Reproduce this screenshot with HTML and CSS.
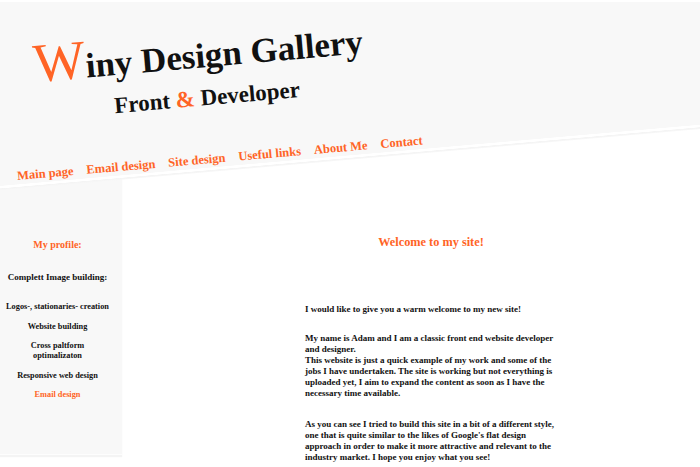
FILE: index.html
```html
<!DOCTYPE html>
<html lang="en">
<head>
<meta charset="utf-8">
<title>Winy Design Gallery</title>
<link rel="stylesheet" href="styles.css">
</head>
<body>
<header class="header">
  <div class="header-inner">
    <h1 class="title"><span class="big-w">W</span>iny Design Gallery</h1>
    <p class="subtitle">Front <span class="amp">&amp;</span> Developer</p>
    <nav class="nav">
      <a href="#">Main page</a>
      <a href="#">Email design</a>
      <a href="#">Site design</a>
      <a href="#">Useful links</a>
      <a href="#">About Me</a>
      <a href="#">Contact</a>
    </nav>
  </div>
</header>
<div class="layout">
  <aside class="sidebar">
    <h2 class="side-title">My profile:</h2>
    <h3 class="side-sub">Complett Image building:</h3>
    <ul class="side-list">
      <li>Logos-, stationaries- creation</li>
      <li>Website building</li>
      <li>Cross paltform<br>optimalizaton</li>
      <li>Responsive web design</li>
      <li class="accent">Email design</li>
    </ul>
  </aside>
  <main class="main">
    <div class="content">
      <h2 class="welcome">Welcome to my site!</h2>
      <p class="intro">I would like to give you a warm welcome to my new site!</p>
      <p class="para">My name is Adam and I am a classic front end website developer and designer.<br>This website is just a quick example of my work and some of the jobs I have undertaken. The site is working but not everything is uploaded yet, I aim to expand the content as soon as I have the necessary time available.</p>
      <p class="para para-last">As you can see I tried to build this site in a bit of a different style, one that is quite similar to the likes of Google's flat design approach in order to make it more attractive and relevant to the industry market. I hope you enjoy what you see!</p>
    </div>
  </main>
</div>
</body>
</html>
```
FILE: styles.css
```css
* { box-sizing: border-box; }
html, body { margin: 0; padding: 0; }
body {
  font-family: "Liberation Serif", "Times New Roman", serif;
  font-weight: bold;
  color: #111;
  background: #fff;
  width: 700px;
  overflow: hidden;
}

.header {
  position: relative;
  z-index: 1;
  height: 190px;
  margin-bottom: -25px;
  background:
    linear-gradient(#fff 2px, transparent 2px),
    linear-gradient(175deg, #f8f8f8 185px, #fff 185.5px, #fff 187.5px, #f4f4f4 188px, #f6f6f6 189px, transparent 190px);
}
.header-inner {
  transform: rotate(-5deg);
  transform-origin: 35px 82px;
}
.title {
  margin: 0;
  padding: 37px 0 0 35px;
  font-size: 35px;
  line-height: 54px;
  font-weight: bold;
  color: #111;
  white-space: nowrap;
}
.big-w {
  font-size: 55px;
  line-height: 54px;
  font-weight: normal;
  color: #ff6426;
}
.subtitle {
  margin: 2.6px 0 0 112px;
  font-size: 23px;
  line-height: 1;
  white-space: nowrap;
}
.amp { color: #ff6426; }
.nav {
  margin-top: 44px;
  padding-left: 9px;
  display: flex;
  gap: 13px;
  font-size: 12.5px;
  line-height: 1;
  white-space: nowrap;
}
.nav a {
  color: #ff6426;
  text-decoration: none;
}

.layout {
  display: flex;
  align-items: flex-start;
}
.sidebar {
  flex: 0 0 122px;
  height: 289px;
  background: #f8f8f8;
  padding: 74px 7px 0 0;
  text-align: center;
  box-shadow: 0 1px 0 #fdfdfd, 0 3px 1px #f4f4f4;
}
.side-title {
  margin: 0;
  font-size: 10px;
  line-height: 12px;
  color: #ff6426;
}
.side-sub {
  margin: 20.5px 0 0;
  font-size: 9px;
  line-height: 11px;
  color: #111;
}
.side-list {
  list-style: none;
  margin: 19.5px 0 0;
  padding: 0;
  display: flex;
  flex-direction: column;
  gap: 9.5px;
  font-size: 8.3px;
  line-height: 10px;
  white-space: nowrap;
}
.side-list .accent { color: #ff6426; }

.main {
  flex: 1;
  padding-top: 69.5px;
}
.content {
  width: 252px;
  margin-left: 183px;
}
.welcome {
  margin: 0;
  text-align: center;
  font-size: 12.3px;
  line-height: 15px;
  color: #ff6426;
}
.intro, .para {
  margin: 18px 0 0;
  font-size: 9px;
  line-height: 11px;
  color: #111;
}
.intro { margin-top: 54px; }
.para-last { margin-top: 20px; }
```
